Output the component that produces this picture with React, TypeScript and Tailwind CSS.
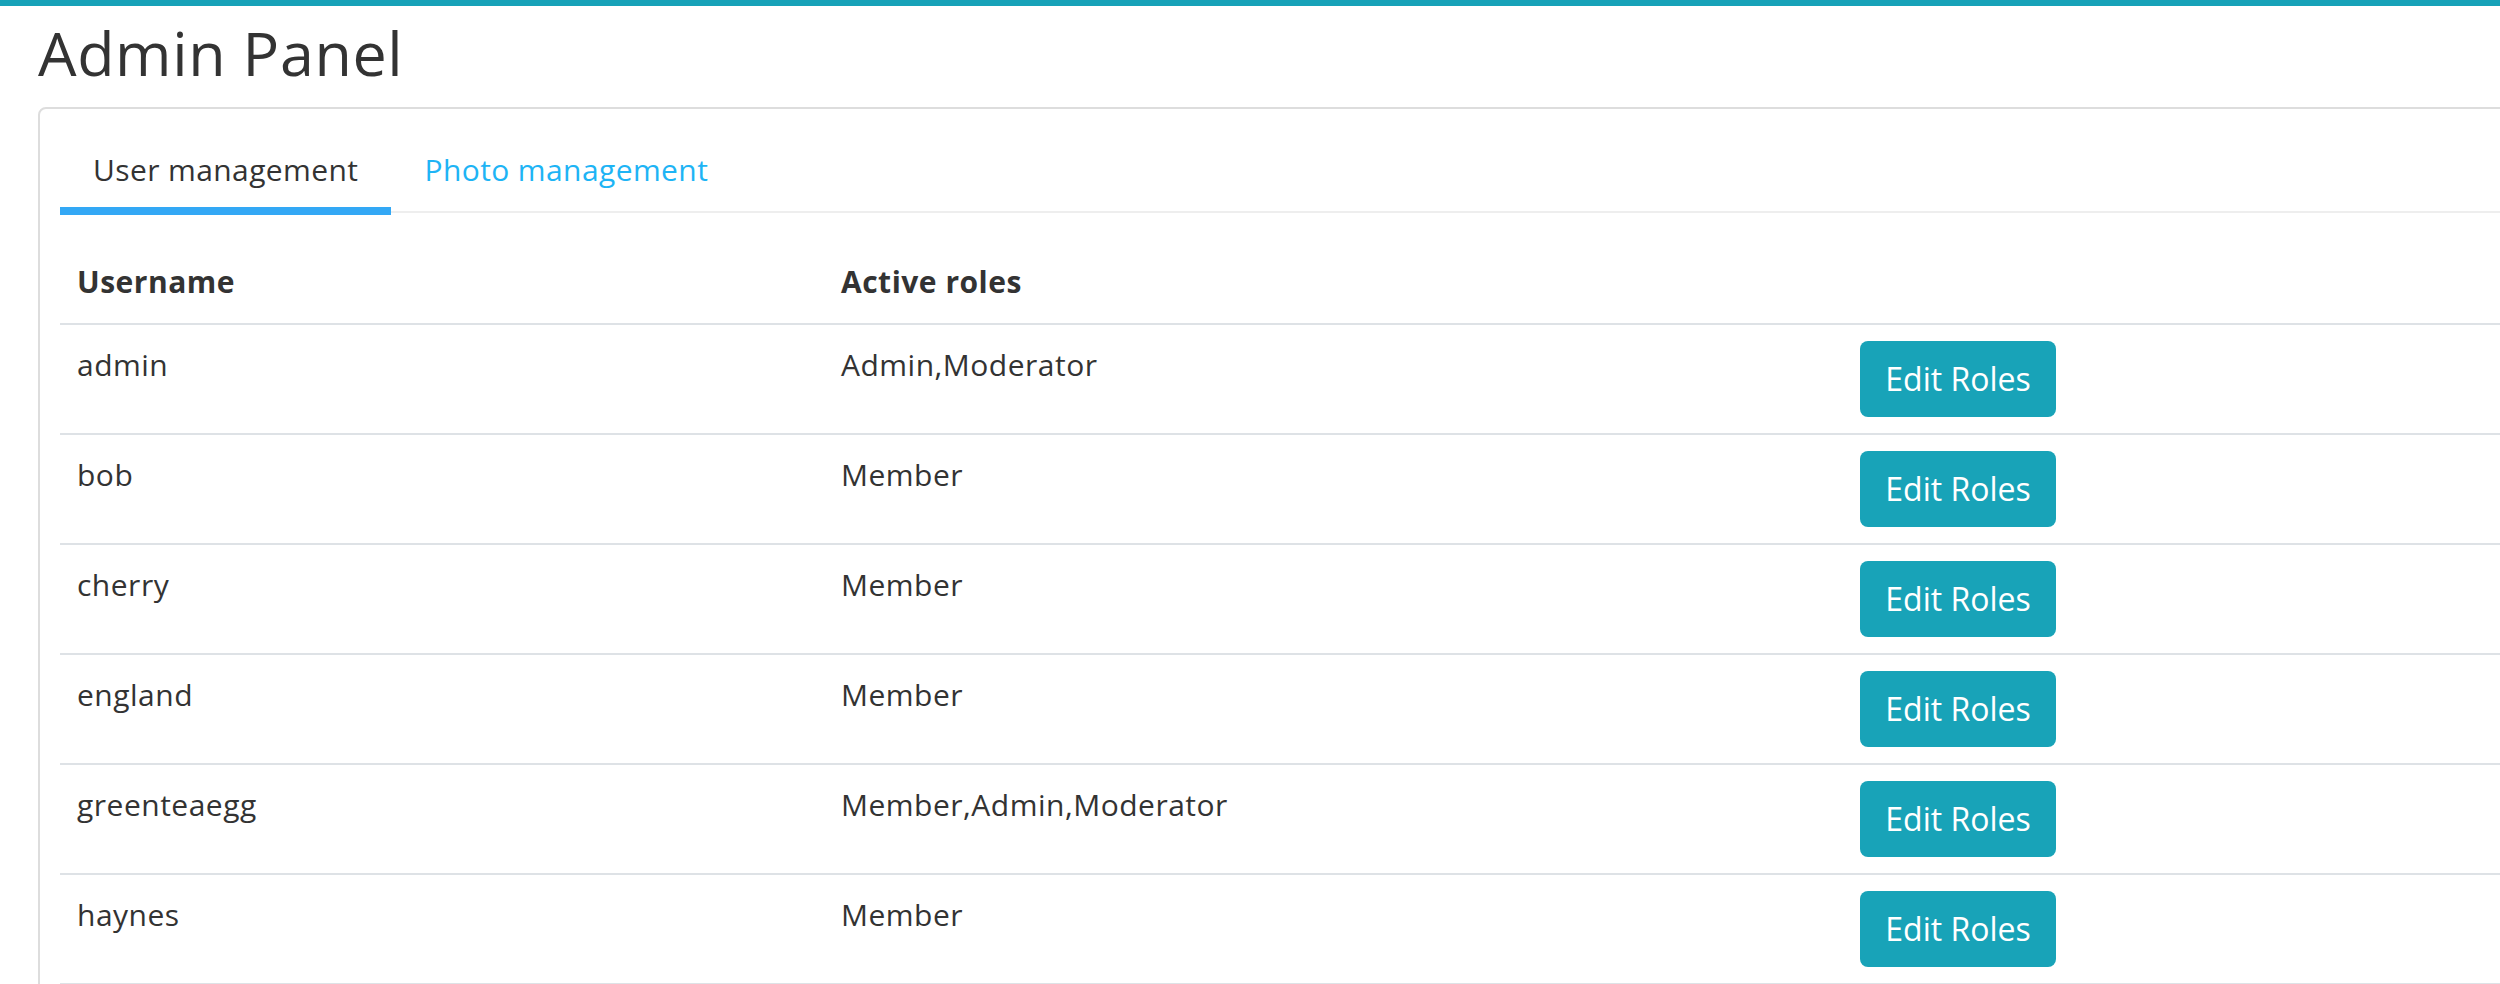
import React from 'react';

type UserRow = { username: string; roles: string[] };

const users: UserRow[] = [
  { username: 'admin', roles: ['Admin', 'Moderator'] },
  { username: 'bob', roles: ['Member'] },
  { username: 'cherry', roles: ['Member'] },
  { username: 'england', roles: ['Member'] },
  { username: 'greenteaegg', roles: ['Member', 'Admin', 'Moderator'] },
  { username: 'haynes', roles: ['Member'] },
];

function Tabs() {
  return (
    <div className="flex border-b-2 border-[#eee] text-[30px] leading-[42px] tracking-[0.4px]">
      <div className="relative px-[33px] py-[20px] text-[#333]">
        User management
        <span className="absolute -bottom-[4px] left-0 right-0 h-[8px] bg-[#33a8f5]" />
      </div>
      <div className="px-[33px] py-[20px] text-[#1eb4f5]">Photo management</div>
    </div>
  );
}

function UserTable() {
  return (
    <div className="text-[30px] leading-[42px] tracking-[0.5px] text-[#333]">
      <div className="flex h-[112px] border-b-2 border-[#dee2e6] font-bold">
        <div className="w-[764px] pl-[17px] pt-[48px]">Username</div>
        <div className="w-[1019px] pl-[17px] pt-[48px]">Active roles</div>
        <div className="flex-1" />
      </div>
      {users.map((u) => (
        <div key={u.username} className="flex h-[110px] border-b-2 border-[#dee2e6]">
          <div className="w-[764px] pl-[17px] pt-[19px]">{u.username}</div>
          <div className="w-[1019px] pl-[17px] pt-[19px]">{u.roles.join(',')}</div>
          <div className="flex-1 pl-[17px] pt-[16px]">
            <button className="flex h-[76px] w-[196px] items-center justify-center rounded-[8px] bg-[#18a3b8] text-[32px] leading-none tracking-normal text-white">
              Edit Roles
            </button>
          </div>
        </div>
      ))}
    </div>
  );
}

export default function App() {
  return (
    <div className="h-screen w-full overflow-hidden bg-white font-['Open_Sans',sans-serif]">
      <div className="h-[6px] bg-[#17a2b8]" />
      <div className="pl-[38px]">
        <h1 className="mt-[16px] mb-[24px] text-[61px] font-normal leading-none tracking-[0.6px] text-[#333]">
          Admin Panel
        </h1>
        <div className="w-[2600px] rounded-tl-[8px] border-2 border-[#ddd] px-[20px] pt-[20px]">
          <Tabs />
          <UserTable />
        </div>
      </div>
    </div>
  );
}
